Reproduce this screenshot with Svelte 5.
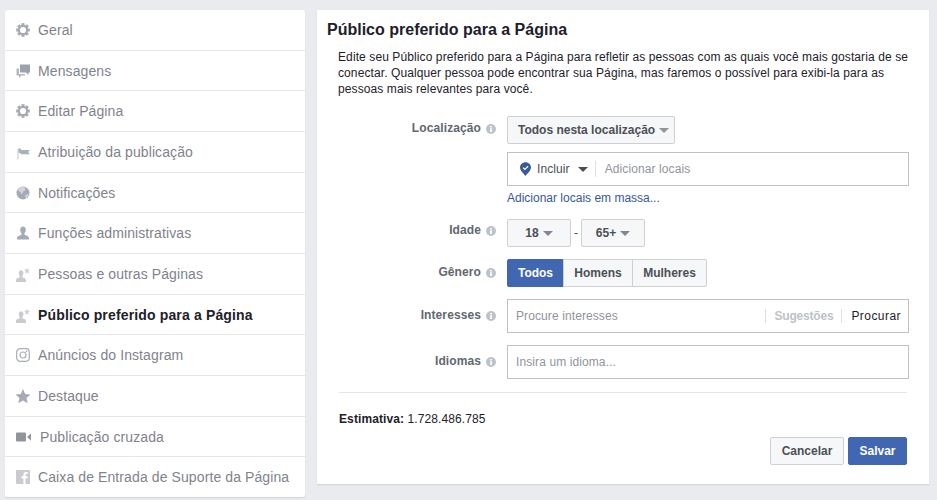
<script>
	const menu = [
		{ label: 'Geral', icon: 'gear' },
		{ label: 'Mensagens', icon: 'chat' },
		{ label: 'Editar Página', icon: 'gear' },
		{ label: 'Atribuição da publicação', icon: 'flag' },
		{ label: 'Notificações', icon: 'globe' },
		{ label: 'Funções administrativas', icon: 'person' },
		{ label: 'Pessoas e outras Páginas', icon: 'personStar', faded: true },
		{ label: 'Público preferido para a Página', icon: 'personStar', active: true },
		{ label: 'Anúncios do Instagram', icon: 'instagram' },
		{ label: 'Destaque', icon: 'star' },
		{ label: 'Publicação cruzada', icon: 'video', wide: true },
		{ label: 'Caixa de Entrada de Suporte da Página', icon: 'fb' }
	];

	const gearTeeth = [0, 45, 90, 135];
</script>

{#snippet info()}
	<svg class="info" viewBox="0 0 10 10" width="10" height="10">
		<circle cx="5" cy="5" r="5" fill="#bec2c9" />
		<rect x="4.200" y="4.200" width="1.700" height="3.800" fill="#fff" />
		<rect x="4.200" y="2" width="1.700" height="1.500" fill="#fff" />
	</svg>
{/snippet}

{#snippet caret(color = '#7f8694')}
	<svg class="caret" viewBox="0 0 10 5" width="10" height="5"><path d="M0 0h10L5 5z" fill={color} /></svg>
{/snippet}

<div class="page">
	<nav class="sidebar">
		{#each menu as item}
			<a class="item" class:active={item.active} class:wide={item.wide}>
				<svg class="icon" viewBox="0 0 16 16" width="16" height="16">
					{#if item.icon === 'gear'}
						{#each gearTeeth as a}
							<rect x="6.500" y="1.200" width="3" height="13.600" fill="#a6aab4" transform="rotate({a} 8 8)" />
						{/each}
						<circle cx="8" cy="8" r="5.200" fill="#a6aab4" />
						<circle cx="8" cy="8" r="3.100" fill="#fff" />
					{:else if item.icon === 'chat'}
						<path d="M5 1.500h10v8h-1.500v2.500l-2.500-2.500H5z" fill="#9da1ab" />
						<path d="M1.500 5.500h2.500v5.500h6v1.500H6.500l-2.500 2.500v-2.500H1.500z" fill="#b4b8c0" />
					{:else if item.icon === 'flag'}
						<path d="M2.500 4.500h1v11h-1z" fill="#c6c9cf" />
						<path d="M3.500 4.500h2.500v1.500h9l-1.800 2 1.800 2.200H5.500V9H3.500z" fill="#adb1ba" />
					{:else if item.icon === 'globe'}
						<circle cx="8" cy="8" r="6.500" fill="#a6aab4" />
						<path d="M8 1.500c-3 .5-4.500 2-5 4l2.500 1.500 1 2.500 1-1 .5-2 2-1 .5-2zM10.500 10l2-1 1 .5c-.5 2-2 3.500-3.500 4z" fill="#d2d4d9" />
					{:else if item.icon === 'person'}
						<path d="M5.200 4.600C5.200 2.700 6.300 1.400 8 1.400s2.800 1.300 2.800 3.200c0 1.700-.7 3-1.300 3.800v1.300c1.200.8 4.200 1 4.500 3.300v1.400H2v-1.400c.3-2.300 3.300-2.500 4.500-3.300V8.400c-.6-.8-1.300-2.100-1.300-3.800z" fill="#a6aab4" />
					{:else if item.icon === 'personStar'}
						<path d="M3.800 7c0-1.700.9-2.800 2.300-2.800S8.400 5.300 8.400 7c0 1.400-.6 2.500-1 3.100v1.100c1 .6 3.300.8 3.600 2.700V16H1v-2.100c.3-1.900 2.600-2.100 3.600-2.700v-1.100c-.4-.6-.8-1.700-.8-3.100z" fill="#c9cbd1" />
						<path d="M12 1.500l.9 2.200 2.400.1-1.900 1.500.7 2.400-2.100-1.300-2.100 1.300.7-2.400-1.900-1.500 2.400-.1z" fill="#d0d2d7" />
					{:else if item.icon === 'instagram'}
						<rect x="1.700" y="1.700" width="12.600" height="12.600" rx="3.500" fill="none" stroke="#a9adb6" stroke-width="1.200" />
						<circle cx="8" cy="8" r="3" fill="none" stroke="#a9adb6" stroke-width="1.200" />
						<circle cx="11.600" cy="4.400" r=".8" fill="#a9adb6" />
					{:else if item.icon === 'star'}
						<path d="M8 1l2.200 4.900 5.300.6-4 3.500 1.200 5.200L8 12.500l-4.700 2.700L4.500 10l-4-3.500 5.300-.6z" fill="#a6aab4" />
					{:else if item.icon === 'video'}
						<rect x="1" y="3.500" width="10" height="9" rx="1" fill="#90949c" />
						<path d="M12 8l4-3.500v7z" fill="#90949c" />
					{:else if item.icon === 'fb'}
						<rect x="1" y="1" width="14" height="14" rx="1" fill="#c9cbd1" />
						<path d="M10.500 15V9.500h1.900l.3-2.200h-2.200V6c0-.7.2-1.100 1.100-1.100h1.100V3c-.3 0-.9-.1-1.600-.1-1.700 0-2.700 1-2.700 2.800v1.600H6.500v2.200h1.900V15z" fill="#fff" />
					{/if}
				</svg>
				<span>{item.label}</span>
			</a>
		{/each}
	</nav>

	<main class="panel">
		<h1>Público preferido para a Página</h1>
		<div class="body">
			<p class="intro">
				Edite seu Público preferido para a Página para refletir as pessoas com as quais você mais gostaria de se<br />
				conectar. Qualquer pessoa pode encontrar sua Página, mas faremos o possível para exibi-la para as<br />
				pessoas mais relevantes para você.
			</p>

			<div class="row first">
				<div class="label">Localização {@render info()}</div>
				<div class="control">
					<button class="btn loc">Todos nesta localização {@render caret('#90949c')}</button>
					<div class="field include">
						<svg class="pin" viewBox="0 0 12 15" width="11" height="14">
							<path d="M6 0C2.700 0 0 2.500 0 5.700 0 9.500 4 12.800 6 15c2-2.200 6-5.500 6-9.300C12 2.500 9.300 0 6 0z" fill="#3b5998" />
							<path d="M3.300 6l2 2 3.500-3.500" fill="none" stroke="#fff" stroke-width="1.300" />
						</svg>
						<span class="incl">Incluir</span>
						{@render caret('#4b4f56')}
						<span class="sep"></span>
						<span class="ph">Adicionar locais</span>
					</div>
					<a class="link">Adicionar locais em massa...</a>
				</div>
			</div>

			<div class="row age">
				<div class="label">Idade {@render info()}</div>
				<div class="control inline">
					<button class="btn num">18 {@render caret('#7f8694')}</button>
					<span class="dash">-</span>
					<button class="btn num">65+ {@render caret('#7f8694')}</button>
				</div>
			</div>

			<div class="row gender">
				<div class="label">Gênero {@render info()}</div>
				<div class="control inline seg">
					<button class="btn on">Todos</button>
					<button class="btn men">Homens</button>
					<button class="btn women">Mulheres</button>
				</div>
			</div>

			<div class="row interests">
				<div class="label">Interesses {@render info()}</div>
				<div class="control">
					<div class="field tall">
						<span class="ph grow">Procure interesses</span>
						<span class="sep"></span>
						<span class="sug">Sugestões</span>
						<span class="sep"></span>
						<span class="search">Procurar</span>
					</div>
				</div>
			</div>

			<div class="row langs">
				<div class="label">Idiomas {@render info()}</div>
				<div class="control">
					<div class="field tall small"><span class="ph">Insira um idioma...</span></div>
				</div>
			</div>

			<div class="footer">
				<div class="estimate"><b>Estimativa:</b> 1.728.486.785</div>
				<div class="actions">
					<button class="btn cancel">Cancelar</button>
					<button class="btn save">Salvar</button>
				</div>
			</div>
		</div>
	</main>
</div>

<style>
	:global(body) {
		background: #e9ebee;
		font-family: 'Liberation Sans', Arial, sans-serif;
	}

	.page {
		display: flex;
		align-items: flex-start;
		gap: 12px;
		padding: 10px 0 0 5px;
		height: 500px;
		box-sizing: border-box;
		overflow: hidden;
	}

	.sidebar {
		display: flex;
		flex-direction: column;
		width: 300px;
		height: 487px;
		flex: none;
		background: #fff;
		border-radius: 3px;
		box-shadow: 0 1px 1px #d3d5d9;
	}

	.item {
		flex: 1;
		display: flex;
		align-items: center;
		gap: 7px;
		padding-left: 10px;
		font-size: 14px;
		letter-spacing: 0.1px;
		color: #7f838c;
		border-bottom: 1px solid #e4e6e9;
	}

	.item:last-child {
		border-bottom: 0;
	}

	.item.wide {
		gap: 9px;
	}

	.item.active {
		font-weight: 700;
		color: #1d2129;
		letter-spacing: 0.15px;
	}

	.panel {
		width: 612px;
		height: 474px;
		flex: none;
		background: #fff;
		box-shadow: 0 1px 1px #d3d5d9;
		box-sizing: border-box;
		padding: 11px 22px 0 10px;
	}

	h1 {
		margin: 0;
		font-size: 16px;
		line-height: 18px;
		color: #1d2129;
	}

	.body {
		padding-left: 11px;
	}

	.intro {
		margin: 10px 0 0;
		font-size: 12px;
		line-height: 16px;
		letter-spacing: 0.1px;
		white-space: nowrap;
		color: #1d2129;
	}

	.row {
		display: flex;
		align-items: flex-start;
	}

	.row.first {
		margin-top: 19px;
	}

	.row.age {
		margin-top: 13px;
	}

	.row.gender {
		margin-top: 12px;
	}

	.row.interests {
		margin-top: 12px;
	}

	.row.langs {
		margin-top: 12px;
	}

	.label {
		width: 158px;
		flex: none;
		display: flex;
		justify-content: flex-end;
		align-items: center;
		gap: 5px;
		font-size: 12px;
		font-weight: 700;
		letter-spacing: 0.1px;
		color: #606770;
		height: 24px;
	}

	.age .label {
		height: 22px;
	}

	.gender .label {
		height: 26px;
	}

	.interests .label,
	.langs .label {
		height: 32px;
	}

	.info {
		flex: none;
		margin-top: 1px;
	}

	.control {
		margin-left: 11px;
		width: 402px;
		flex: none;
		display: flex;
		flex-direction: column;
		align-items: flex-start;
	}

	.control.inline {
		flex-direction: row;
		align-items: center;
	}

	.btn {
		font-family: inherit;
		font-size: 12px;
		font-weight: 700;
		color: #4b4f56;
		height: 28px;
		padding: 0 11px;
		background: #f6f7f9;
		border: 1px solid #ced0d4;
		border-radius: 2px;
		display: inline-flex;
		align-items: center;
		gap: 4px;
		box-sizing: border-box;
	}

	.loc {
		padding: 0 5px 0 10px;
	}

	.caret {
		flex: none;
	}

	.field {
		width: 100%;
		box-sizing: border-box;
		height: 34px;
		border: 1px solid #bdc1c9;
		display: flex;
		align-items: center;
		font-size: 12px;
	}

	.include {
		margin-top: 8px;
		padding-left: 12px;
	}

	.pin {
		margin-right: 6px;
	}

	.incl {
		color: #4b4f56;
		margin-right: 8px;
		letter-spacing: 0.1px;
	}

	.sep {
		width: 1px;
		height: 16px;
		background: #dddfe2;
		margin: 0 9px 0 7px;
		flex: none;
	}

	.ph {
		color: #90949c;
		letter-spacing: 0.1px;
	}

	.grow {
		flex: 1;
	}

	.link {
		margin-top: 5px;
		font-size: 12px;
		line-height: 15px;
		color: #365899;
	}

	.num {
		justify-content: center;
		width: 64px;
	}

	.dash {
		width: 10px;
		text-align: center;
		font-size: 12px;
		color: #4b4f56;
	}

	.seg .btn {
		border-radius: 0;
		margin-right: -1px;
		padding: 0;
		justify-content: center;
	}

	.seg .btn.on {
		width: 57px;
		background: #4267b2;
		border-color: #4267b2;
		color: #fff;
		border-radius: 2px 0 0 2px;
	}

	.seg .men {
		width: 70px;
	}

	.seg .women {
		width: 75px;
		border-radius: 0 2px 2px 0;
	}

	.tall {
		padding-left: 8px;
	}

	.tall .sep {
		height: 14px;
		margin: 0 8px;
	}

	.sug {
		font-weight: 700;
		color: #bec2c9;
		letter-spacing: -0.2px;
	}

	.tall .sug + .sep {
		margin: 0 9px 0 8px;
	}

	.search {
		color: #1d2129;
		letter-spacing: 0.45px;
		margin-right: 7px;
	}

	.footer {
		margin-top: 13px;
		margin-left: 1px;
		border-top: 1px solid #e4e6e9;
		padding-top: 19px;
	}

	.estimate {
		font-size: 12px;
		line-height: 14px;
		letter-spacing: 0.1px;
		color: #1d2129;
	}

	.actions {
		display: flex;
		justify-content: flex-end;
		gap: 4px;
		margin-top: 11px;
	}

	.cancel {
		width: 74px;
		justify-content: center;
		padding: 0;
	}

	.save {
		width: 59px;
		justify-content: center;
		padding: 0;
		background: #4267b2;
		border-color: #4267b2;
		color: #fff;
	}
</style>
